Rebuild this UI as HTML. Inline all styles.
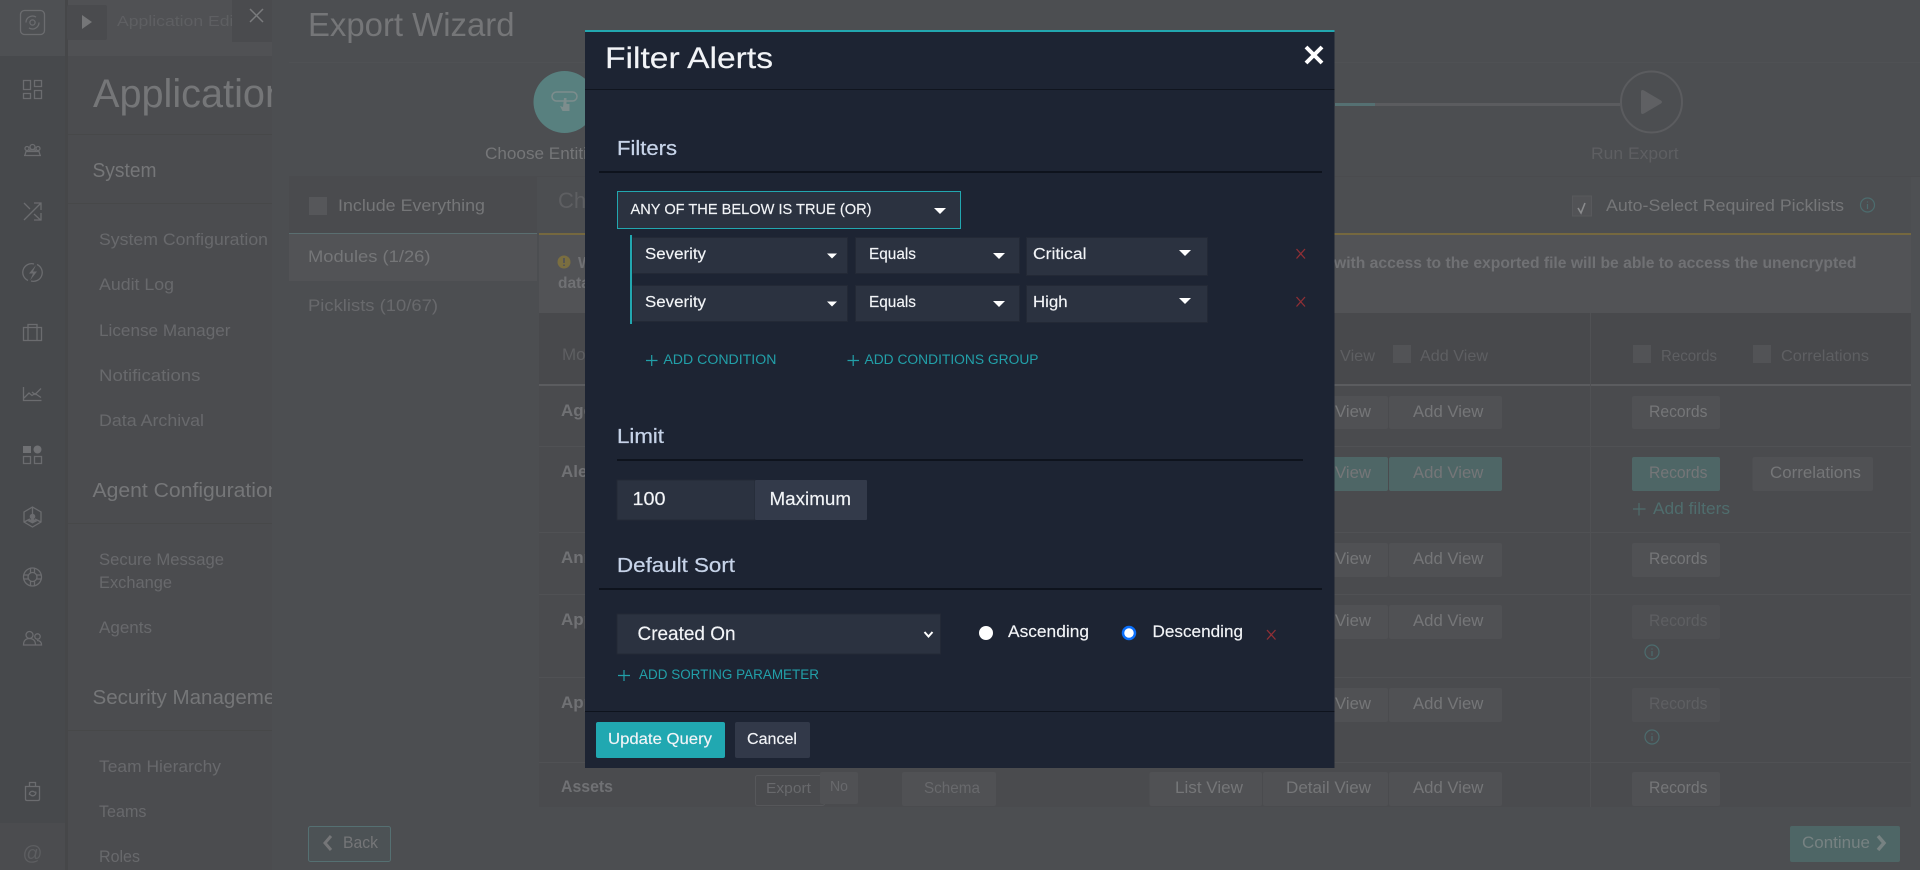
<!DOCTYPE html>
<html lang="en">
<head>
<meta charset="utf-8">
<title>Filter Alerts</title>
<style>
html,body{margin:0;padding:0;width:1920px;height:870px;overflow:hidden;background:#4c4e51}
svg{display:block}
text{font-family:"Liberation Sans",Arial,sans-serif;white-space:pre}
.h{fill:#757678}
.m{fill:#68696c}
.d{fill:#5e5f62}
.b{fill:#707174;font-weight:bold}
.w{fill:#f2f4f7;stroke:#f2f4f7;stroke-width:.15}
.q{fill:#c6d3e8;stroke:#c6d3e8;stroke-width:.25}
.c{fill:#22a0a9}
.i{fill:none;stroke:#6b6c6f;stroke-width:1.3}
.btn{fill:#505154}
.mp{fill:#2b3240;stroke:#232936;stroke-width:1}
</style>
</head>
<body>
<svg width="1920" height="870" viewBox="0 0 1920 870" xmlns="http://www.w3.org/2000/svg">
<defs>
<clipPath id="pc"><rect x="68" y="0" width="204" height="870"/></clipPath>
<clipPath id="tc"><rect x="68" y="0" width="164" height="56"/></clipPath>
</defs>

<!-- base -->
<rect width="1920" height="870" fill="#4c4e51"/>
<rect x="0" y="0" width="65" height="870" fill="#47494c"/>
<rect x="0" y="0" width="65" height="56" fill="#4e5053"/>
<rect x="0" y="823" width="65" height="47" fill="#4b4c4f"/>
<rect x="65" y="0" width="3" height="870" fill="#464749"/>
<rect x="68" y="0" width="204" height="870" fill="#4b4c4f"/>
<rect x="68" y="0" width="204" height="56" fill="#505154"/>
<rect x="67" y="5" width="40" height="35" rx="2" fill="#4a4b4e"/>
<polygon points="82,15 82,29 92,22" fill="#757678"/>
<g clip-path="url(#tc)"><text x="117" y="26" font-size="15" class="d" textLength="137" lengthAdjust="spacingAndGlyphs">Application Editor</text></g>
<rect x="232" y="0" width="40" height="42" fill="#4a4b4e"/>
<path d="M250 9L263 22M263 9L250 22" stroke="#7a7b7d" stroke-width="1.5" fill="none"/>

<!-- icon rail -->
<rect x="20.500" y="10.500" width="24" height="24" rx="4" class="i"/>
<circle cx="32.500" cy="22.500" r="2.600" class="i"/>
<path d="M26 22.500a6.500 6.500 0 0 1 10-5.400M39 22.500a6.500 6.500 0 0 1-10 5.400" class="i"/>
<path d="M23.500 80.500h7v9h-7zM23.500 93.500h7v5h-7zM34.500 80.500h7v6h-7zM34.500 90.500h7v8h-7z" class="i"/>
<circle cx="32.500" cy="147" r="2.500" class="i"/>
<circle cx="27" cy="148.500" r="2" class="i"/>
<circle cx="38" cy="148.500" r="2" class="i"/>
<path d="M24 155.500h17M25 155l1-3.500h13l1 3.500M29 151.500l1-1.500h5l1 1.500" class="i"/>
<path d="M24 203l6 6M34 214l6.500 6M24 220l17-17M34 203h7v7M41 213v7h-7" class="i"/>
<path d="M28 280.500a8.800 8.800 0 0 1 6-16.500M37 264.500a8.800 8.800 0 0 1-6 16.500" class="i"/>
<path d="M36 265l-7 8.500h4l-3 7 7-9h-4z" fill="#6b6c6f"/>
<path d="M23.500 327.500h18v13h-18zM28 327.500v-3h9v3M28 327.500v13M37 327.500v13" class="i"/>
<path d="M23.500 387v13.500h18M24 398l5-5 3 2.500 3-2 6 4M32 392l3 2.500 6-6" class="i"/>
<rect x="23" y="446" width="8" height="7" fill="#707174"/>
<circle cx="37.500" cy="449.500" r="4" fill="#707174"/>
<path d="M23.500 456.500h7v7h-7zM34.500 456.500h7v7h-7z" class="i"/>
<path d="M32.500 507l8.500 5v10l-8.500 5-8.500-5v-10z" class="i"/>
<circle cx="32.500" cy="516.500" r="2.800" fill="#6b6c6f"/>
<path d="M27.500 521l5-2.500 5 2.500-5 2.500z" fill="#6b6c6f"/>
<path d="M32.500 507v7M24 522l6-3M41 522l-6-3" class="i"/>
<circle cx="32.500" cy="577" r="9" class="i"/>
<circle cx="32.500" cy="577" r="4.500" class="i"/>
<path d="M30.500 568.500v4M34.500 568.500v4M30.500 581.500v4M34.500 581.500v4M24 575h4M24 579h4M37 575h4M37 579h4" class="i"/>
<circle cx="29.500" cy="635" r="3.500" class="i"/>
<circle cx="37.500" cy="636.500" r="2.700" class="i"/>
<path d="M23.500 645c0-5 3-6.500 6-6.500s6 1.500 6 6.500zM37 640.500c3 0 4.500 1.500 4.500 4.500h-6" class="i"/>
<path d="M25.500 786.500h14v12.500q0 1.500-1.500 1.500h-11q-1.500 0-1.500-1.500zM29.500 786v-3.500h6v3.500M29.500 795a3 3 0 0 1 4-3.500l1.500 1M35.500 791.500a3 3 0 0 1-4 4l-1.500-1" class="i"/>
<text x="22.500" y="860" font-size="20" fill="#5d5e61" textLength="20" lengthAdjust="spacingAndGlyphs">@</text>

<!-- application panel -->
<g clip-path="url(#pc)">
<text x="93" y="107" font-size="40" class="h" textLength="194" lengthAdjust="spacingAndGlyphs">Application</text>
<rect x="68" y="134" width="204" height="1" fill="#474849"/>
<text x="92.500" y="177" font-size="20" class="h" textLength="64" lengthAdjust="spacingAndGlyphs">System</text>
<rect x="68" y="203" width="204" height="1" fill="#474849"/>
<text x="99" y="245" font-size="17" class="m" textLength="169" lengthAdjust="spacingAndGlyphs">System Configuration</text>
<text x="99" y="290" font-size="17" class="m" textLength="75" lengthAdjust="spacingAndGlyphs">Audit Log</text>
<text x="99" y="336" font-size="17" class="m" textLength="131.500" lengthAdjust="spacingAndGlyphs">License Manager</text>
<text x="99" y="381" font-size="17" class="m" textLength="101.500" lengthAdjust="spacingAndGlyphs">Notifications</text>
<text x="99" y="426" font-size="17" class="m" textLength="105" lengthAdjust="spacingAndGlyphs">Data Archival</text>
<text x="92.500" y="497" font-size="20" class="h" textLength="187" lengthAdjust="spacingAndGlyphs">Agent Configuration</text>
<rect x="68" y="523" width="204" height="1" fill="#474849"/>
<text x="99" y="565" font-size="17" class="m" textLength="125" lengthAdjust="spacingAndGlyphs">Secure Message</text>
<text x="99" y="588" font-size="17" class="m" textLength="73" lengthAdjust="spacingAndGlyphs">Exchange</text>
<text x="99" y="633" font-size="17" class="m" textLength="53" lengthAdjust="spacingAndGlyphs">Agents</text>
<text x="92.500" y="704" font-size="20" class="h" textLength="200" lengthAdjust="spacingAndGlyphs">Security Management</text>
<rect x="68" y="730" width="204" height="1" fill="#474849"/>
<text x="99" y="772" font-size="17" class="m" textLength="122" lengthAdjust="spacingAndGlyphs">Team Hierarchy</text>
<text x="99" y="817" font-size="17" class="m" textLength="47.500" lengthAdjust="spacingAndGlyphs">Teams</text>
<text x="99" y="862" font-size="17" class="m" textLength="41" lengthAdjust="spacingAndGlyphs">Roles</text>
</g>

<!-- wizard header -->
<text x="308" y="36" font-size="33" class="h" textLength="206.500" lengthAdjust="spacingAndGlyphs">Export Wizard</text>
<rect x="289" y="62" width="1631" height="1" fill="#4f5154"/>
<circle cx="564.500" cy="102" r="31" fill="#58807f"/>
<rect x="552" y="92" width="25" height="9" rx="4.500" fill="none" stroke="#7d8d8d" stroke-width="1.500"/>
<path d="M564 98h2.500v6h3v7h-7l-2.500-5 3 1z" fill="#7d8d8d"/>
<text x="485" y="159" font-size="17" class="h" textLength="120" lengthAdjust="spacingAndGlyphs">Choose Entities</text>
<rect x="1335" y="103" width="40" height="3" fill="#557072"/>
<rect x="1375" y="103" width="245" height="3" fill="#5b5c5f"/>
<circle cx="1651.500" cy="102" r="30.500" fill="none" stroke="#5b5c5f" stroke-width="2"/>
<path d="M1641 92q0-3 3-1.500l17 10q2 1.500 0 3l-17 10q-3 1.500-3-1.500z" fill="#5f6063"/>
<text x="1591" y="159" font-size="17" class="d" textLength="87.600" lengthAdjust="spacingAndGlyphs">Run Export</text>
<rect x="289" y="176" width="1631" height="1" fill="#4a4b4e"/>

<!-- left tabs -->
<rect x="289" y="177" width="248" height="56" fill="#4a4b4e"/>
<rect x="309" y="197" width="18" height="18" fill="#56575a"/>
<text x="338" y="211" font-size="17" class="h" textLength="147" lengthAdjust="spacingAndGlyphs">Include Everything</text>
<rect x="289" y="233" width="248" height="1.500" fill="#5a6e70"/>
<rect x="289" y="234" width="248" height="47" fill="#525356"/>
<text x="308" y="262" font-size="17" class="h" textLength="122.500" lengthAdjust="spacingAndGlyphs">Modules (1/26)</text>
<text x="308" y="311" font-size="17" class="m" textLength="130" lengthAdjust="spacingAndGlyphs">Picklists (10/67)</text>

<!-- right panel -->
<text x="558" y="208" font-size="22" class="d">Choose</text>
<rect x="1572.500" y="196" width="19" height="20" fill="#525356" stroke="#58595c"/>
<path d="M1578 208l3 5 4-10" fill="none" stroke="#8a8b8d" stroke-width="1.600"/>
<text x="1606" y="211" font-size="17" class="h" textLength="238" lengthAdjust="spacingAndGlyphs">Auto-Select Required Picklists</text>
<circle cx="1867.500" cy="205" r="7" fill="none" stroke="#4c6c6e" stroke-width="1.200"/>
<path d="M1867.500 201.500v1M1867.500 204v5" stroke="#4c6c6e" stroke-width="1.200"/>
<rect x="539" y="233" width="1372" height="2" fill="#75683f"/>
<rect x="539" y="235" width="1372" height="78" fill="#525356"/>
<circle cx="564" cy="262" r="6.500" fill="#7a6e40"/>
<path d="M564 258v5M564 264.500v1.500" stroke="#525356" stroke-width="1.800"/>
<text x="578" y="268" font-size="15.500" class="b">Warning</text>
<text x="558" y="288" font-size="15.500" class="b">data</text>
<text x="1334" y="268" font-size="15.500" class="b" textLength="522.500" lengthAdjust="spacingAndGlyphs">with access to the exported file will be able to access the unencrypted</text>

<!-- table -->
<rect x="539" y="313" width="1372" height="72" fill="#48494c"/>
<rect x="539" y="385" width="1372" height="422" fill="#4a4b4e"/>
<rect x="539" y="384" width="1372" height="2" fill="#5b5c5f"/>
<rect x="539" y="446" width="1372" height="1" fill="#505154"/>
<rect x="539" y="532" width="1372" height="1" fill="#505154"/>
<rect x="539" y="594" width="1372" height="1" fill="#505154"/>
<rect x="539" y="677" width="1372" height="1" fill="#505154"/>
<rect x="539" y="762" width="1372" height="1" fill="#505154"/>
<rect x="1590" y="313" width="1" height="494" fill="#505154"/>

<text x="562" y="360" font-size="17" class="d">Module</text>
<text x="1340" y="361" font-size="16" class="d" textLength="35" lengthAdjust="spacingAndGlyphs">View</text>
<rect x="1393" y="345" width="18" height="18" fill="#525356"/>
<text x="1420" y="361" font-size="16" class="d" textLength="68" lengthAdjust="spacingAndGlyphs">Add View</text>
<rect x="1633" y="345" width="18" height="18" fill="#525356"/>
<text x="1661" y="361" font-size="16" class="d" textLength="56" lengthAdjust="spacingAndGlyphs">Records</text>
<rect x="1753" y="345" width="18" height="18" fill="#525356"/>
<text x="1781" y="361" font-size="16" class="d" textLength="88" lengthAdjust="spacingAndGlyphs">Correlations</text>

<text x="561" y="416" font-size="17" class="b">Agents</text>
<text x="561" y="477" font-size="17" class="b">Alerts</text>
<text x="561" y="563" font-size="17" class="b">Announcements</text>
<text x="561" y="625" font-size="17" class="b">Approvals</text>
<text x="561" y="708" font-size="17" class="b">Application</text>
<text x="561" y="792" font-size="17" class="b" textLength="52" lengthAdjust="spacingAndGlyphs">Assets</text>

<!-- row 1 -->
<rect x="1300" y="396" width="88" height="33" rx="2" class="btn"/>
<rect x="1389" y="396" width="113" height="33" rx="2" class="btn"/>
<rect x="1632" y="396" width="88" height="33" rx="2" class="btn"/>
<text x="1335" y="417" font-size="16.500" class="h" textLength="36" lengthAdjust="spacingAndGlyphs">View</text>
<text x="1413" y="417" font-size="16.500" class="h" textLength="70.400" lengthAdjust="spacingAndGlyphs">Add View</text>
<text x="1649" y="417" font-size="16.500" class="h" textLength="58.500" lengthAdjust="spacingAndGlyphs">Records</text>
<!-- row 2 -->
<rect x="1300" y="457" width="88" height="34" rx="2" fill="#4e6666"/>
<rect x="1389" y="457" width="113" height="34" rx="2" fill="#4e6666"/>
<rect x="1632" y="457" width="88" height="34" rx="2" fill="#4e6666"/>
<rect x="1752.500" y="457" width="120.500" height="34" rx="2" class="btn"/>
<text x="1335" y="478" font-size="16.500" class="h" textLength="36" lengthAdjust="spacingAndGlyphs">View</text>
<text x="1413" y="478" font-size="16.500" class="h" textLength="70.400" lengthAdjust="spacingAndGlyphs">Add View</text>
<text x="1649" y="478" font-size="16.500" class="h" textLength="58.500" lengthAdjust="spacingAndGlyphs">Records</text>
<text x="1770" y="478" font-size="16.500" class="h" textLength="91" lengthAdjust="spacingAndGlyphs">Correlations</text>
<path d="M1633 509h12.500M1639 503v12.500" stroke="#4f6d6d" stroke-width="1.200" fill="none"/>
<text x="1653" y="514" font-size="17" fill="#4f6d6d" textLength="77" lengthAdjust="spacingAndGlyphs">Add filters</text>
<!-- row 3 -->
<rect x="1300" y="543" width="88" height="34" rx="2" class="btn"/>
<rect x="1389" y="543" width="113" height="34" rx="2" class="btn"/>
<rect x="1632" y="543" width="88" height="34" rx="2" class="btn"/>
<text x="1335" y="564" font-size="16.500" class="h" textLength="36" lengthAdjust="spacingAndGlyphs">View</text>
<text x="1413" y="564" font-size="16.500" class="h" textLength="70.400" lengthAdjust="spacingAndGlyphs">Add View</text>
<text x="1649" y="564" font-size="16.500" class="h" textLength="58.500" lengthAdjust="spacingAndGlyphs">Records</text>
<!-- row 4 -->
<rect x="1300" y="605" width="88" height="34" rx="2" class="btn"/>
<rect x="1389" y="605" width="113" height="34" rx="2" class="btn"/>
<rect x="1632" y="605" width="88" height="34" rx="2" fill="#4e4f52"/>
<text x="1335" y="626" font-size="16.500" class="h" textLength="36" lengthAdjust="spacingAndGlyphs">View</text>
<text x="1413" y="626" font-size="16.500" class="h" textLength="70.400" lengthAdjust="spacingAndGlyphs">Add View</text>
<text x="1649" y="626" font-size="16.500" class="d" textLength="58.500" lengthAdjust="spacingAndGlyphs">Records</text>
<circle cx="1652" cy="652" r="7" fill="none" stroke="#4c6c6e" stroke-width="1.200"/>
<path d="M1652 648.500v1M1652 651v5" stroke="#4c6c6e" stroke-width="1.200"/>
<!-- row 5 -->
<rect x="1300" y="688" width="88" height="34" rx="2" class="btn"/>
<rect x="1389" y="688" width="113" height="34" rx="2" class="btn"/>
<rect x="1632" y="688" width="88" height="34" rx="2" fill="#4e4f52"/>
<text x="1335" y="709" font-size="16.500" class="h" textLength="36" lengthAdjust="spacingAndGlyphs">View</text>
<text x="1413" y="709" font-size="16.500" class="h" textLength="70.400" lengthAdjust="spacingAndGlyphs">Add View</text>
<text x="1649" y="709" font-size="16.500" class="d" textLength="58.500" lengthAdjust="spacingAndGlyphs">Records</text>
<circle cx="1652" cy="737" r="7" fill="none" stroke="#4c6c6e" stroke-width="1.200"/>
<path d="M1652 733.500v1M1652 736v5" stroke="#4c6c6e" stroke-width="1.200"/>
<!-- row 6 -->
<rect x="755.500" y="775.500" width="69" height="30" rx="2" fill="none" stroke="#56575a"/>
<text x="766" y="793" font-size="15" class="m" textLength="45" lengthAdjust="spacingAndGlyphs">Export</text>
<rect x="820" y="772" width="38" height="32" rx="2" class="btn"/>
<text x="830" y="791" font-size="14.500" class="m" textLength="18" lengthAdjust="spacingAndGlyphs">No</text>
<rect x="902" y="772" width="94" height="34" rx="2" class="btn"/>
<text x="924" y="793" font-size="16" class="m" textLength="56" lengthAdjust="spacingAndGlyphs">Schema</text>
<rect x="1149.500" y="772" width="112.500" height="34" rx="2" class="btn"/>
<rect x="1263" y="772" width="125" height="34" rx="2" class="btn"/>
<rect x="1389" y="772" width="113" height="34" rx="2" class="btn"/>
<rect x="1632" y="772" width="88" height="34" rx="2" class="btn"/>
<text x="1175" y="793" font-size="16.500" class="h" textLength="68" lengthAdjust="spacingAndGlyphs">List View</text>
<text x="1286" y="793" font-size="16.500" class="h" textLength="85" lengthAdjust="spacingAndGlyphs">Detail View</text>
<text x="1413" y="793" font-size="16.500" class="h" textLength="70.400" lengthAdjust="spacingAndGlyphs">Add View</text>
<text x="1649" y="793" font-size="16.500" class="h" textLength="58.500" lengthAdjust="spacingAndGlyphs">Records</text>

<!-- scrollbar edge -->
<rect x="1911" y="177" width="9" height="253" fill="#4e5053"/>

<!-- footer -->
<rect x="308.500" y="826.500" width="82" height="35" rx="2" fill="#4c5255" stroke="#557072"/>
<path d="M331 836l-6 7 6 7" fill="none" stroke="#757678" stroke-width="3"/>
<text x="343" y="848" font-size="17" class="h" textLength="35" lengthAdjust="spacingAndGlyphs">Back</text>
<rect x="1790" y="826" width="110" height="36" rx="2" fill="#4e6666"/>
<text x="1802" y="848" font-size="17" fill="#778282" textLength="68" lengthAdjust="spacingAndGlyphs">Continue</text>
<path d="M1878 836l6 7-6 7" fill="none" stroke="#778282" stroke-width="3.500"/>

<!-- MODAL -->
<rect x="585" y="30" width="749.500" height="738" fill="#1d2433"/>
<rect x="585" y="30" width="749.500" height="2" fill="#22a7b0"/>
<text x="605" y="68" font-size="30" class="w" textLength="168" lengthAdjust="spacingAndGlyphs">Filter Alerts</text>
<path d="M1306 47l16 16M1322 47l-16 16" stroke="#fff" stroke-width="4" fill="none"/>
<rect x="585" y="89" width="749.500" height="1" fill="#10151f"/>

<text x="617" y="155" font-size="20" class="q" textLength="60" lengthAdjust="spacingAndGlyphs">Filters</text>
<rect x="599" y="171" width="723" height="2" fill="#0e131d"/>

<rect x="617.500" y="191.500" width="343" height="37" fill="#2b3240" stroke="#22a7b0"/>
<text x="630.500" y="214" font-size="14.500" class="w" textLength="241" lengthAdjust="spacingAndGlyphs">ANY OF THE BELOW IS TRUE (OR)</text>
<polygon points="934,208 946,208 940,214" fill="#fff"/>

<rect x="630" y="235" width="2" height="89" fill="#22a7b0"/>

<rect x="632.500" y="237.500" width="215" height="36" class="mp"/>
<text x="645" y="259" font-size="15.500" class="w" textLength="61" lengthAdjust="spacingAndGlyphs">Severity</text>
<polygon points="827,253.500 837,253.500 832,258.500" fill="#fff"/>
<rect x="855.500" y="237.500" width="164" height="36" class="mp"/>
<text x="869" y="259" font-size="15.500" class="w" textLength="47" lengthAdjust="spacingAndGlyphs">Equals</text>
<polygon points="993,253 1005,253 999,259" fill="#fff"/>
<rect x="1026.500" y="237.500" width="181" height="38" class="mp"/>
<text x="1033" y="259" font-size="15.500" class="w" textLength="53.500" lengthAdjust="spacingAndGlyphs">Critical</text>
<polygon points="1179,250 1191,250 1185,256" fill="#fff"/>
<path d="M1296.500 249l8.500 9.500M1305 249l-8.500 9.500" stroke="#8f2f35" stroke-width="1.300" fill="none"/>

<rect x="632.500" y="285.500" width="215" height="36" class="mp"/>
<text x="645" y="307" font-size="15.500" class="w" textLength="61" lengthAdjust="spacingAndGlyphs">Severity</text>
<polygon points="827,301.500 837,301.500 832,306.500" fill="#fff"/>
<rect x="855.500" y="285.500" width="164" height="36" class="mp"/>
<text x="869" y="307" font-size="15.500" class="w" textLength="47" lengthAdjust="spacingAndGlyphs">Equals</text>
<polygon points="993,301 1005,301 999,307" fill="#fff"/>
<rect x="1026.500" y="285.500" width="181" height="37" class="mp"/>
<text x="1033" y="307" font-size="15.500" class="w" textLength="34.600" lengthAdjust="spacingAndGlyphs">High</text>
<polygon points="1179,298 1191,298 1185,304" fill="#fff"/>
<path d="M1296.500 297l8.500 9.500M1305 297l-8.500 9.500" stroke="#8f2f35" stroke-width="1.300" fill="none"/>

<path d="M646 360.500h11.500M651.700 355v11" stroke="#22a0a9" stroke-width="1.200" fill="none"/>
<text x="663.400" y="364" font-size="13.500" class="c" textLength="113" lengthAdjust="spacingAndGlyphs">ADD CONDITION</text>
<path d="M847.500 360.500h11.500M853.200 355v11" stroke="#22a0a9" stroke-width="1.200" fill="none"/>
<text x="864.500" y="364" font-size="13.500" class="c" textLength="174" lengthAdjust="spacingAndGlyphs">ADD CONDITIONS GROUP</text>

<text x="617" y="443" font-size="20" class="q" textLength="47" lengthAdjust="spacingAndGlyphs">Limit</text>
<rect x="617" y="459" width="686" height="2" fill="#0e131d"/>
<rect x="617" y="480" width="138" height="40" class="mp"/>
<text x="632.500" y="505" font-size="18" class="w" textLength="33" lengthAdjust="spacingAndGlyphs">100</text>
<rect x="755" y="480" width="112" height="40" rx="1" fill="#333a4a"/>
<text x="769.500" y="505" font-size="18" class="w" textLength="81.500" lengthAdjust="spacingAndGlyphs">Maximum</text>

<text x="617" y="572" font-size="20" class="q" textLength="118" lengthAdjust="spacingAndGlyphs">Default Sort</text>
<rect x="599" y="588" width="723" height="2" fill="#0e131d"/>
<rect x="617" y="614" width="323.500" height="40" class="mp"/>
<text x="637.500" y="640" font-size="19" class="w" textLength="98" lengthAdjust="spacingAndGlyphs">Created On</text>
<path d="M924.500 632l4 4.500 4-4.500" stroke="#fff" stroke-width="2" fill="none"/>

<circle cx="986" cy="633" r="7" fill="#fff"/>
<text x="1008" y="637" font-size="17" class="w" textLength="81" lengthAdjust="spacingAndGlyphs">Ascending</text>
<circle cx="1129" cy="633" r="6" fill="#fff" stroke="#0b6ffa" stroke-width="2.500"/>
<text x="1152.500" y="637" font-size="17" class="w" textLength="90.500" lengthAdjust="spacingAndGlyphs">Descending</text>
<path d="M1267 630l8.500 9.500M1275.500 630l-8.500 9.500" stroke="#8f2f35" stroke-width="1.300" fill="none"/>

<path d="M618 675.500h12M624 670v11" stroke="#22a0a9" stroke-width="1.200" fill="none"/>
<text x="639" y="679" font-size="13.500" class="c" textLength="180" lengthAdjust="spacingAndGlyphs">ADD SORTING PARAMETER</text>

<rect x="585" y="711" width="749.500" height="1" fill="#0e131d"/>
<rect x="596" y="722" width="129" height="36" rx="2" fill="#21a8b1"/>
<text x="608" y="744" font-size="16" class="w" textLength="104" lengthAdjust="spacingAndGlyphs">Update Query</text>
<rect x="735" y="722" width="75" height="36" rx="2" fill="#323949"/>
<text x="747" y="744" font-size="16" class="w" textLength="50" lengthAdjust="spacingAndGlyphs">Cancel</text>
</svg>
</body>
</html>
